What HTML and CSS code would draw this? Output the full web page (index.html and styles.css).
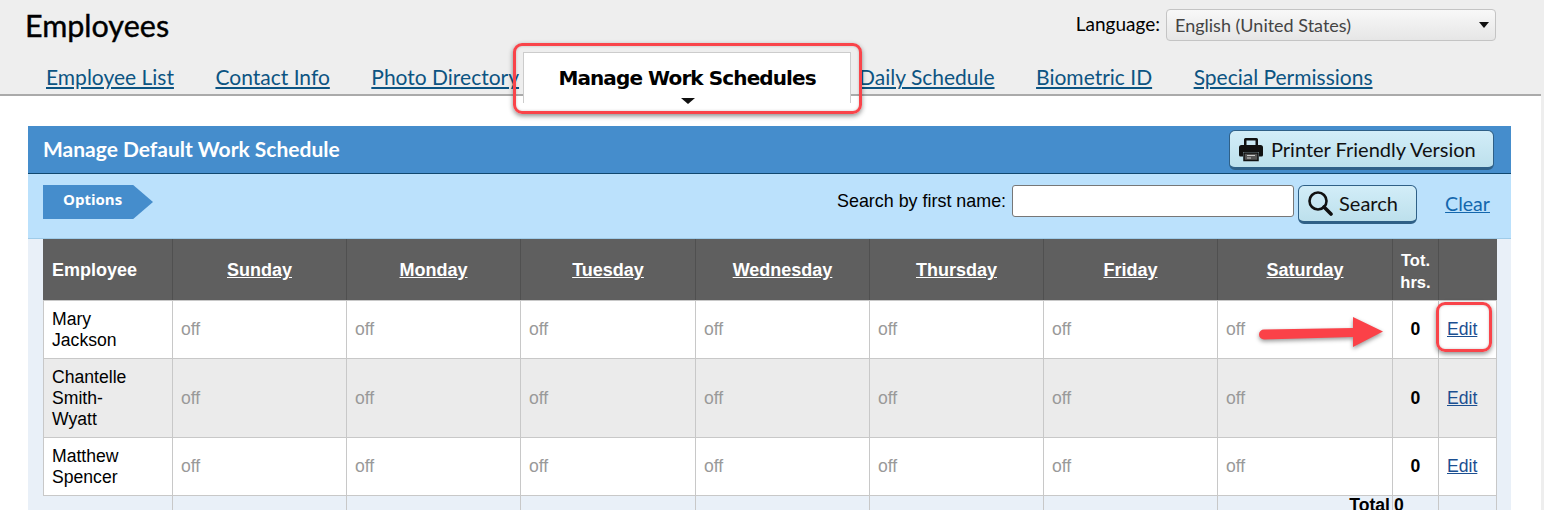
FILE: index.html
```html
<!DOCTYPE html>
<html lang="en">

<head>
    <meta charset="UTF-8">
    <title>Employees</title>
    <link rel="stylesheet" href="styles.css">
</head>

<body>
    <div class="page">
        <!-- Top grey header with title, language and tabs -->
        <header class="header">
            <div class="header-top">
                <h1>Employees</h1>
                <div class="language">
                    <label for="lang">Language:</label>
                    <div class="select-wrap">
                        <select id="lang">
                            <option>English (United States)</option>
                        </select>
                    </div>
                </div>
            </div>
            <nav class="tabs">
                <a href="#">Employee List</a>
                <a href="#">Contact Info</a>
                <a href="#">Photo Directory</a>
                <span class="tab-active">Manage Work Schedules</span>
                <a href="#">Daily Schedule</a>
                <a href="#">Biometric ID</a>
                <a href="#">Special Permissions</a>
            </nav>
        </header>

        <section class="panel">
            <div class="title-bar">
                <h2>Manage Default Work Schedule</h2>
                <button class="btn btn-print">
                    <svg width="26" height="26" viewBox="0 0 26 26">
                        <path d="M6 10V3.500A1.500 1.500 0 0 1 7.500 2h11A1.500 1.500 0 0 1 20 3.500V10h-2.500V4.500h-9V10z" fill="#111" />
                        <path d="M3.500 9h19A2.500 2.500 0 0 1 25 11.500V19a1.500 1.500 0 0 1-1.500 1.500H21V16H5v4.500H2.500A1.500 1.500 0 0 1 1 19v-7.500A2.500 2.500 0 0 1 3.500 9z" fill="#111" />
                        <path d="M6 17h14v7.500H6z" fill="#555" stroke="#111" stroke-width="1.500" />
                        <path d="M9 19.500h8M9 22h4" stroke="#ccc" stroke-width="1.200" />
                    </svg>
                    Printer Friendly Version
                </button>
            </div>
            <div class="options-bar">
                <div class="options-tag">Options</div>
                <div class="search">
                    <label for="firstName">Search by first name:</label>
                    <input type="text" id="firstName">
                    <button class="btn btn-search">
                        <svg width="26" height="26" viewBox="0 0 26 26">
                            <circle cx="11" cy="11" r="8.500" fill="none" stroke="#111" stroke-width="2.600" />
                            <path d="M17 17l7 7" stroke="#111" stroke-width="3.600" stroke-linecap="round" />
                        </svg>
                        Search
                    </button>
                    <a class="clear" href="#">Clear</a>
                </div>
            </div>

            <div class="table-wrap">
                <table class="schedule">
                    <colgroup>
                        <col class="col-name">
                        <col class="col-day">
                        <col class="col-day">
                        <col class="col-day-wide">
                        <col class="col-day">
                        <col class="col-day">
                        <col class="col-day">
                        <col class="col-day-wide">
                        <col class="col-total">
                        <col class="col-edit">
                    </colgroup>
                    <thead>
                        <tr>
                            <th class="left">Employee</th>
                            <th><a href="#">Sunday</a></th>
                            <th><a href="#">Monday</a></th>
                            <th><a href="#">Tuesday</a></th>
                            <th><a href="#">Wednesday</a></th>
                            <th><a href="#">Thursday</a></th>
                            <th><a href="#">Friday</a></th>
                            <th><a href="#">Saturday</a></th>
                            <th class="small">Tot. hrs.</th>
                            <th></th>
                        </tr>
                    </thead>
                    <tbody>
                        <tr class="row-short">
                            <td class="name">Mary Jackson</td>
                            <td class="off">off</td>
                            <td class="off">off</td>
                            <td class="off">off</td>
                            <td class="off">off</td>
                            <td class="off">off</td>
                            <td class="off">off</td>
                            <td class="off">off</td>
                            <td class="total">0</td>
                            <td class="edit"><a href="#">Edit</a></td>
                        </tr>
                        <tr class="row-alt">
                            <td class="name">Chantelle Smith-Wyatt</td>
                            <td class="off">off</td>
                            <td class="off">off</td>
                            <td class="off">off</td>
                            <td class="off">off</td>
                            <td class="off">off</td>
                            <td class="off">off</td>
                            <td class="off">off</td>
                            <td class="total">0</td>
                            <td class="edit"><a href="#">Edit</a></td>
                        </tr>
                        <tr class="row-short">
                            <td class="name">Matthew Spencer</td>
                            <td class="off">off</td>
                            <td class="off">off</td>
                            <td class="off">off</td>
                            <td class="off">off</td>
                            <td class="off">off</td>
                            <td class="off">off</td>
                            <td class="off">off</td>
                            <td class="total">0</td>
                            <td class="edit"><a href="#">Edit</a></td>
                        </tr>
                    </tbody>
                    <tfoot>
                        <tr>
                            <td class="foot-name"></td>
                            <td></td>
                            <td></td>
                            <td></td>
                            <td></td>
                            <td></td>
                            <td></td>
                            <td class="foot-label">Total</td>
                            <td class="foot-value">0</td>
                            <td></td>
                        </tr>
                    </tfoot>
                </table>
            </div>
        </section>

        <!-- Red annotations drawn over the screenshot -->
        <div class="mark mark-tab"></div>
        <div class="mark mark-edit"></div>
        <svg class="mark-arrow" width="130" height="36" viewBox="0 0 130 36">
            <path d="M6 15.500L95 14V3l30 14.500L95 33V23L6 25.500a5 5 0 0 1 0-10z" fill="#fb4148" />
        </svg>
    </div>
</body>

</html>
```

FILE: styles.css
```css
/* Basic page styling */
html,
body {
    margin: 0;
    height: 510px;
    overflow: hidden;
    background-color: #eeeeee;
}

.page {
    position: relative;
    width: 1541px;
    height: 510px;
    overflow: hidden;
    background-color: #fff;
    font-family: "Liberation Sans", Arial, sans-serif;
    font-size: 17.6px;
    color: #000;
}

/* Header */
.header {
    height: 94px;
    background-color: #eeeeee;
    border-bottom: 2px solid #aaaaaa;
}

.header-top {
    display: flex;
    justify-content: space-between;
    height: 52px;
    padding: 9px 45px 0 25px;
    box-sizing: border-box;
}

h1 {
    margin: 0;
    font-family: Lato, sans-serif;
    font-size: 30.5px;
    font-weight: 400;
    -webkit-text-stroke: 0.4px #000;
    line-height: 32px;
}

.language {
    display: flex;
    align-items: flex-start;
    gap: 6px;
    font-family: Lato, sans-serif;
    font-size: 19px;
}

.language label {
    line-height: 30px;
}

.select-wrap {
    position: relative;
    width: 330px;
}

.select-wrap::after {
    content: '';
    position: absolute;
    right: 7px;
    top: 13px;
    border: 5px solid transparent;
    border-top: 6px solid #111;
    border-bottom: 0;
}

.select-wrap select {
    width: 100%;
    height: 32px;
    padding: 0 8px;
    appearance: none;
    border: 1px solid #c4c4c4;
    border-radius: 4px;
    background: linear-gradient(#f8f8f8, #e6e6e6);
    color: #444;
    font-family: Lato, sans-serif;
    font-size: 18px;
}

/* Tabs */
.tabs {
    display: flex;
    gap: 41.5px;
    padding-left: 46px;
    height: 42px;
    font-family: Lato, sans-serif;
    font-size: 21px;
}

.tabs a {
    color: #0c5482;
    line-height: 50px;
    height: 42px;
}

.tab-active {
    position: relative;
    width: 326px;
    height: 50px;
    margin: 0 -33.5px 0 -37.5px;
    background-color: #fff;
    border: 1px solid #cccccc;
    border-bottom: 0;
    font-family: "DejaVu Sans", Verdana, sans-serif;
    font-size: 20px;
    font-weight: bold;
    line-height: 50px;
    text-align: center;
    letter-spacing: -0.9px;
}

.tab-active::after {
    content: '';
    position: absolute;
    left: 157px;
    top: 45px;
    border: 7px solid transparent;
    border-top: 6px solid #111;
    border-bottom: 0;
}

/* Panel */
.panel {
    position: relative;
    margin: 30px 30px 0 28px;
    background-color: #e9f0f8;
}

.title-bar {
    display: flex;
    justify-content: space-between;
    align-items: flex-start;
    height: 48px;
    padding: 4px 17px 0 15px;
    box-sizing: border-box;
    background-color: #458dcc;
    border-bottom: 1px solid #10486f;
}

.title-bar h2 {
    margin: 0;
    color: #fff;
    font-family: Lato, sans-serif;
    font-size: 21px;
    font-weight: bold;
    line-height: 37px;
}

.btn {
    display: flex;
    align-items: center;
    box-sizing: border-box;
    background: linear-gradient(#d2edf8, #bde0ec);
    border: 1px solid #2f6087;
    border-bottom-width: 3px;
    border-radius: 6px;
    color: #111;
    font-family: Lato, sans-serif;
    font-size: 20px;
    padding: 0;
}

.btn-print {
    width: 265px;
    height: 40px;
    gap: 7px;
    padding: 0 0 1px 8px;
}

.options-bar {
    display: flex;
    justify-content: space-between;
    align-items: flex-start;
    height: 65px;
    padding: 11px 21px 0 15px;
    box-sizing: border-box;
    background-color: #bbe1fc;
    border-bottom: 1px solid #9fcbe8;
}

.options-tag {
    width: 110px;
    height: 34px;
    padding-left: 20px;
    box-sizing: border-box;
    background-color: #458dcc;
    clip-path: polygon(0 0, 82% 0, 100% 50%, 82% 100%, 0 100%);
    color: #fff;
    font-family: "Open Sans", sans-serif;
    font-size: 15px;
    font-weight: bold;
    line-height: 28px;
}

.search {
    display: flex;
    align-items: flex-start;
}

.search label {
    font-size: 17.9px;
    line-height: 32px;
    margin-right: 6px;
}

.search input {
    width: 282px;
    height: 32px;
    margin: 0 4px 0 0;
    padding: 0;
    box-sizing: border-box;
    border: 1px solid #777;
    border-radius: 3px;
    background-color: #fff;
}

.btn-search {
    width: 119px;
    height: 39px;
    gap: 6px;
    padding: 0 0 1px 8px;
}

.clear {
    margin-left: 28px;
    color: #1467ad;
    font-family: Lato, sans-serif;
    font-size: 19.6px;
    line-height: 38px;
}

/* Schedule table */
.table-wrap {
    padding: 0 15px;
    height: 272px;
}

.schedule {
    table-layout: fixed;
    width: 1453px;
    border-collapse: collapse;
}

.col-name {
    width: 129px;
}

.col-day {
    width: 174px;
}

.col-day-wide {
    width: 175px;
}

.col-total {
    width: 46px;
}

.col-edit {
    width: 58px;
}

.schedule th {
    height: 59px;
    padding: 2px 0 0;
    background-color: #5f5f5f;
    border-left: 1px solid #505050;
    border-bottom: 1px solid #c8c8c8;
    color: #fff;
    font-size: 18px;
    font-weight: bold;
    text-align: center;
}

.schedule th a {
    color: #fff;
}

.schedule th.left {
    padding-left: 8px;
    border-left: 1px solid #5f5f5f;
    text-align: left;
}

.schedule th.small {
    font-size: 16.5px;
    line-height: 22px;
}

.schedule td {
    padding: 0 8px;
    border: 1px solid #c8c8c8;
    line-height: 21px;
}

tbody td {
    background-color: #fff;
}

.row-short td {
    height: 58px;
}

.row-alt td {
    height: 79px;
    background-color: #ebebeb;
}

.row-short td,
.row-alt td {
    box-sizing: border-box;
}

.schedule td.name {
    padding-right: 30px;
}

td.off {
    color: #999;
}

.schedule td.total {
    padding: 0;
    text-align: center;
    font-weight: bold;
}

.schedule td.edit a {
    color: #1b4f91;
}

.schedule tfoot td {
    height: 16px;
    border-top: 0;
    border-bottom: 0;
    vertical-align: top;
    font-weight: bold;
    line-height: 18px;
    padding: 0;
}

.schedule tfoot td.foot-name {
    border-left: 0;
}

.schedule tfoot td.foot-label {
    padding-right: 2px;
    text-align: right;
}

.schedule tfoot td.foot-value {
    padding-left: 1px;
}

/* Annotations */
.mark {
    position: absolute;
    box-sizing: border-box;
    border: 3px solid #f9444a;
    border-radius: 9px;
    box-shadow: 0 2px 5px rgba(0, 0, 0, 0.45), inset 0 0 3px rgba(0, 0, 0, 0.2);
}

.mark-tab {
    left: 513px;
    top: 43px;
    width: 349px;
    height: 71px;
}

.mark-edit {
    left: 1436px;
    top: 302px;
    width: 56px;
    height: 50px;
}

.mark-arrow {
    position: absolute;
    left: 1258px;
    top: 314px;
    filter: drop-shadow(0 2px 2px rgba(0, 0, 0, 0.4));
}
```
